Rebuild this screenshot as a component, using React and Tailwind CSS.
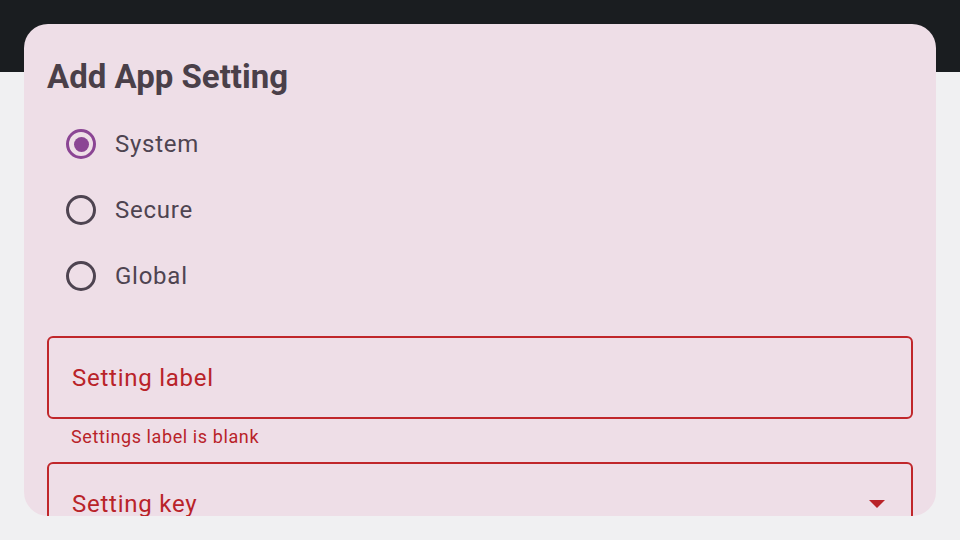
const options = ['System', 'Secure', 'Global']

const Radio = ({ checked }) => (
  <span
    className={
      checked
        ? 'flex h-[30px] w-[30px] items-center justify-center rounded-full border-[3px] border-[#8b4594]'
        : 'flex h-[30px] w-[30px] items-center justify-center rounded-full border-[3px] border-[#4e4451]'
    }
  >
    {checked && <span className="h-[15px] w-[15px] rounded-full bg-[#8b4594]" />}
  </span>
)

const App = () => {
  return (
    <div
      className="relative h-[540px] w-[960px] overflow-hidden bg-[#f0f0f2]"
      style={{ fontFamily: 'Roboto, "Liberation Sans", sans-serif' }}
    >
      <div className="h-[72px] bg-[#1a1d20]" />

      {/* dialog sheet over the page */}
      <div className="absolute left-[24px] top-[24px] h-[492px] w-[912px] overflow-hidden rounded-[24px] bg-[#eedee7]">
        <div className="px-[23px] pt-[33px]">
          <h2 className="text-[33px] font-bold leading-[40px] text-[#4a4049]">Add App Setting</h2>

          <div className="mt-[14px] flex flex-col">
            {options.map((opt, i) => (
              <div key={opt} className="flex h-[66px] items-center pl-[19px]">
                <Radio checked={i === 0} />
                <span className="ml-[19px] text-[24px] tracking-[0.75px] text-[#4e4451]">{opt}</span>
              </div>
            ))}
          </div>

          <div className="mt-[27px] flex h-[83px] items-center rounded-[6px] border-2 border-[#c0272b] px-[23px]">
            <span className="text-[24px] tracking-[0.75px] text-[#b92329]">Setting label</span>
          </div>
          <p className="mt-[8px] pl-[24px] text-[18px] leading-[20px] tracking-[0.6px] text-[#b92329]">
            Settings label is blank
          </p>

          <div className="mt-[15px] flex h-[83px] items-center justify-between rounded-[6px] border-2 border-[#c0272b] pl-[23px] pr-[26px]">
            <span className="text-[24px] tracking-[0.75px] text-[#b92329]">Setting key</span>
            <svg width="16" height="8" viewBox="0 0 16 8">
              <path d="M0 0h16L8 8z" fill="#b92329" />
            </svg>
          </div>
        </div>
      </div>
    </div>
  )
}

export default App
